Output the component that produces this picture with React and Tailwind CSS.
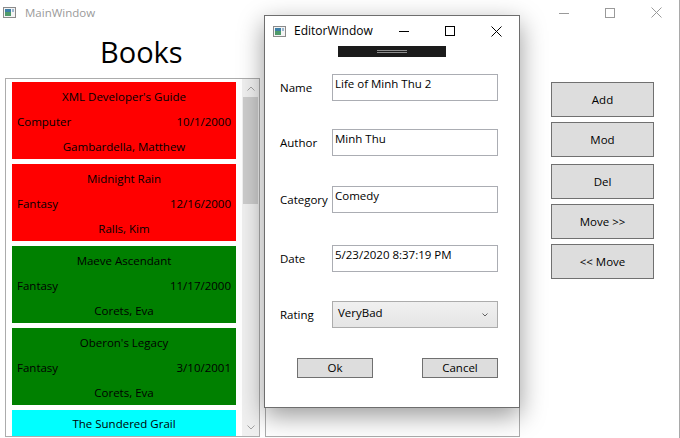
import React from "react";

const books = [
  { title: "XML Developer's Guide", genre: "Computer", date: "10/1/2000", author: "Gambardella, Matthew", color: "bg-[#ff0000]" },
  { title: "Midnight Rain", genre: "Fantasy", date: "12/16/2000", author: "Ralls, Kim", color: "bg-[#ff0000]" },
  { title: "Maeve Ascendant", genre: "Fantasy", date: "11/17/2000", author: "Corets, Eva", color: "bg-[#008000]" },
  { title: "Oberon's Legacy", genre: "Fantasy", date: "3/10/2001", author: "Corets, Eva", color: "bg-[#008000]" },
  { title: "The Sundered Grail", color: "bg-[#00ffff]" },
];

function AppIcon() {
  return (
    <svg width="13" height="11" viewBox="0 0 13 11">
      <rect x="0.5" y="0.5" width="12" height="10" fill="#f4f4f4" stroke="#8a8a8a" />
      <rect x="2" y="2" width="6" height="7" fill="#3d7fa8" />
      <rect x="2" y="5" width="6" height="4" fill="#4f9a6a" />
      <rect x="9" y="2" width="2" height="3" fill="#9bb7cf" />
    </svg>
  );
}

function CaptionButtons({ color }) {
  return (
    <div className="flex h-full">
      <div className="flex h-full w-[46px] items-center justify-center">
        <svg width="10" height="10" viewBox="0 0 10 10">
          <line x1="0" y1="5.5" x2="10" y2="5.5" stroke={color} strokeWidth="1" />
        </svg>
      </div>
      <div className="flex h-full w-[46px] items-center justify-center">
        <svg width="10" height="10" viewBox="0 0 10 10">
          <rect x="0.5" y="0.5" width="9" height="9" fill="none" stroke={color} strokeWidth="1" />
        </svg>
      </div>
      <div className="flex h-full w-[46px] items-center justify-center">
        <svg width="11" height="11" viewBox="0 0 11 11">
          <path d="M0.5 0.5 L10.5 10.5 M10.5 0.5 L0.5 10.5" stroke={color} strokeWidth="1" />
        </svg>
      </div>
    </div>
  );
}

function BookItem({ book }) {
  // the last item is cut by the list, only its title row shows
  if (!book.genre) {
    return (
      <div className={`${book.color} h-[77px] w-[224px] shrink-0 pt-[1px] text-black`}>
        <div className="flex h-[25px] items-center justify-center">{book.title}</div>
      </div>
    );
  }
  return (
    <div className={`${book.color} h-[77px] w-[224px] shrink-0 pt-[2px] text-black`}>
      <div className="flex h-[25px] items-center justify-center">{book.title}</div>
      <div className="flex h-[25px] items-center justify-between px-[5px]">
        <span>{book.genre}</span>
        <span>{book.date}</span>
      </div>
      <div className="flex h-[25px] items-center justify-center">{book.author}</div>
    </div>
  );
}

function WinButton({ children, className = "" }) {
  return (
    <div className={`flex items-center justify-center border border-[#707070] bg-[#dddddd] text-black ${className}`}>
      {children}
    </div>
  );
}

function Field({ label, value, className = "" }) {
  return (
    <div className={`flex h-[27px] items-center ${className}`}>
      <div className="w-[52px]">{label}</div>
      <div className="h-[27px] w-[166px] border border-[#abadb3] pl-[2px] leading-[18px]">{value}</div>
    </div>
  );
}

export default function App() {
  return (
    <div
      className="relative h-[438px] w-[680px] overflow-hidden border-r border-[#a9a9a9] bg-white text-[11.5px]"
      style={{ fontFamily: '"Open Sans", "Noto Sans", sans-serif' }}
    >
      {/* Main window title bar */}
      <div className="flex h-[25px] items-center">
        <div className="ml-[3px] flex items-center">
          <AppIcon />
        </div>
        <span className="ml-[9px] mt-[1px] text-[#9a9a9a]">MainWindow</span>
        <div className="flex-1" />
        <div className="h-[24px]">
          <CaptionButtons color="#9a9a9a" />
        </div>
      </div>

      <div className="flex">
        {/* Left column */}
        <div className="ml-[5px] flex w-[255px] flex-col">
          <h1 className="h-[53px] pl-[95px] pt-[7px] text-[29px] leading-[40px] text-black">Books</h1>
          <div className="flex h-[359px] border border-[#acacac]">
            <div className="flex flex-1 flex-col gap-[5px] overflow-hidden pl-[6px] pt-[3px]">
              {books.map((b) => (
                <BookItem key={b.title} book={b} />
              ))}
            </div>
            <div className="flex w-[17px] flex-col bg-[#f0f0f0]">
              <div className="flex h-[18px] items-center justify-center">
                <svg width="8" height="5" viewBox="0 0 8 5">
                  <path d="M0.5 4.5 L4 1 L7.5 4.5" fill="none" stroke="#a3a3a3" strokeWidth="1" />
                </svg>
              </div>
              <div className="mx-[1px] h-[107px] bg-[#cdcdcd]" />
              <div className="flex-1" />
              <div className="flex h-[18px] items-center justify-center">
                <svg width="8" height="5" viewBox="0 0 8 5">
                  <path d="M0.5 0.5 L4 4 L7.5 0.5" fill="none" stroke="#a3a3a3" strokeWidth="1" />
                </svg>
              </div>
            </div>
          </div>
        </div>

        {/* Second list */}
        <div className="ml-[5px] w-[255px] pt-[53px]">
          <div className="h-[359px] border border-[#acacac]" />
        </div>

        {/* Buttons */}
        <div className="ml-[31px] flex w-[103px] flex-col pt-[57px]">
          <WinButton className="h-[35px]">Add</WinButton>
          <WinButton className="mt-[5px] h-[35px]">Mod</WinButton>
          <WinButton className="mt-[7px] h-[35px]">Del</WinButton>
          <WinButton className="mt-[5px] h-[35px]">Move &gt;&gt;</WinButton>
          <WinButton className="mt-[5px] h-[35px]">&lt;&lt; Move</WinButton>
        </div>
      </div>

      {/* Editor window */}
      <div className="absolute left-[264px] top-[15px] flex h-[393px] w-[256px] flex-col border border-[#6e6e6e] bg-white shadow-[0_8px_24px_rgba(0,0,0,0.4)]">
        <div className="flex h-[30px] items-center">
          <div className="ml-[8px] flex items-center">
            <AppIcon />
          </div>
          <span className="ml-[8px] text-[12px] text-black">EditorWindow</span>
          <div className="flex-1" />
          <CaptionButtons color="#000000" />
        </div>
        <div className="mx-auto flex h-[11px] w-[108px] flex-col items-center justify-center gap-[1px] bg-[#1b1b1b]">
          <div className="h-[1px] w-[30px] bg-[#8c8c8c]" />
          <div className="h-[1px] w-[30px] bg-[#8c8c8c]" />
        </div>

        <div className="flex flex-col pl-[15px] text-black">
          <Field className="mt-[17px]" label="Name" value="Life of Minh Thu 2" />
          <Field className="mt-[28px]" label="Author" value="Minh Thu" />
          <Field className="mt-[30px]" label="Category" value="Comedy" />
          <Field className="mt-[32px]" label="Date" value="5/23/2020 8:37:19 PM" />
          <div className="mt-[29px] flex h-[27px] items-center">
            <div className="w-[52px]">Rating</div>
            <div className="flex h-[27px] w-[166px] items-center justify-between border border-[#acacac] bg-gradient-to-b from-[#f0f0f0] to-[#e5e5e5] pl-[5px] pr-[9px]">
              <span className="-mt-[3px]">VeryBad</span>
              <svg width="6" height="4" viewBox="0 0 6 4">
                <path d="M0.5 0.5 L3 3 L5.5 0.5" fill="none" stroke="#606060" strokeWidth="1" />
              </svg>
            </div>
          </div>
          <div className="mt-[30px] flex">
            <WinButton className="ml-[17px] h-[20px] w-[76px]">Ok</WinButton>
            <WinButton className="ml-[49px] h-[20px] w-[76px]">Cancel</WinButton>
          </div>
        </div>
      </div>
    </div>
  );
}
